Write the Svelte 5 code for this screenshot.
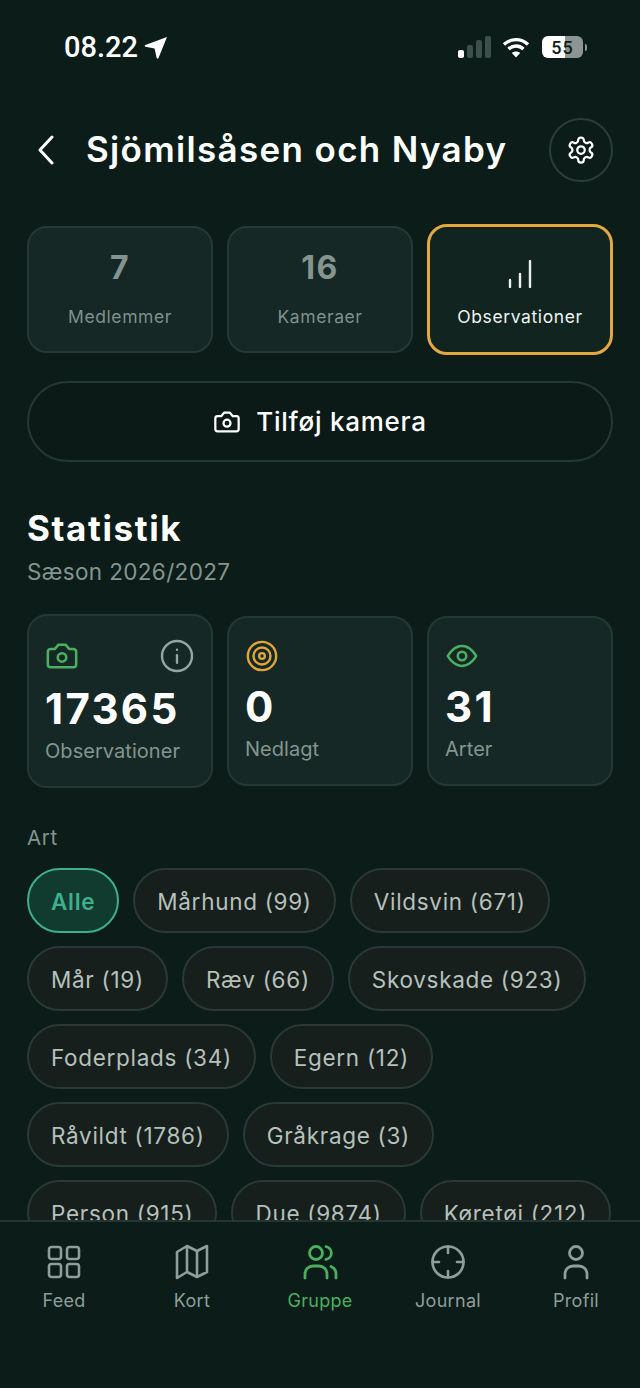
<script lang="ts">
	const chips = [
		'Mårhund (99)', 'Vildsvin (671)', 'Mår (19)', 'Ræv (66)', 'Skovskade (923)',
		'Foderplads (34)', 'Egern (12)', 'Råvildt (1786)', 'Gråkrage (3)',
		'Person (915)', 'Due (9874)', 'Køretøj (212)'
	]
</script>

<div class="screen">
	<main class="content">
		<div class="status">
			<div class="time">
				<span>08.22</span>
				<svg width="24" height="24" viewBox="0 0 24 24" aria-hidden="true"><path d="M23 2 L14.5 23 Q13.5 24.5 12.6 22.8 L10.6 13.6 L1.5 11.8 Q0 11 1.4 10 Z" fill="#fff"/></svg>
			</div>
			<div class="indicators">
				<div class="signal">
					<i class="on"></i><i style="height:13px"></i><i style="height:18px"></i><i style="height:22px"></i>
				</div>
				<svg width="28" height="21" viewBox="0 0 28 21" aria-hidden="true">
					<path d="M2 7.5 C9 1 19 1 26 7.5 M6.5 12 C11 8 17 8 21.5 12" fill="none" stroke="#fff" stroke-width="3.4"/>
					<path d="M14 20.5 L9.8 16 C12 14 16 14 18.2 16 Z" fill="#fff"/>
				</svg>
				<div class="battery"><span>55</span></div>
				<div class="nub"></div>
			</div>
		</div>

		<header class="top">
			<svg class="back" width="22" height="30" viewBox="0 0 22 30" aria-hidden="true"><path d="M16 2 L4 15 L16 28" fill="none" stroke="#fff" stroke-width="3" stroke-linecap="round" stroke-linejoin="round"/></svg>
			<h1>Sjömilsåsen och Nyaby</h1>
			<button class="gear" aria-label="Indstillinger">
				<svg width="30" height="30" viewBox="0 0 24 24" fill="none" stroke="#fff" stroke-width="1.8" stroke-linecap="round" stroke-linejoin="round"><path d="M12.22 2h-.44a2 2 0 0 0-2 2v.18a2 2 0 0 1-1 1.73l-.43.25a2 2 0 0 1-2 0l-.15-.08a2 2 0 0 0-2.73.73l-.22.38a2 2 0 0 0 .73 2.73l.15.1a2 2 0 0 1 1 1.72v.51a2 2 0 0 1-1 1.74l-.15.09a2 2 0 0 0-.73 2.73l.22.38a2 2 0 0 0 2.73.73l.15-.08a2 2 0 0 1 2 0l.43.25a2 2 0 0 1 1 1.73V20a2 2 0 0 0 2 2h.44a2 2 0 0 0 2-2v-.18a2 2 0 0 1 1-1.73l.43-.25a2 2 0 0 1 2 0l.15.08a2 2 0 0 0 2.73-.73l.22-.39a2 2 0 0 0-.73-2.73l-.15-.08a2 2 0 0 1-1-1.74v-.5a2 2 0 0 1 1-1.74l.15-.09a2 2 0 0 0 .73-2.73l-.22-.38a2 2 0 0 0-2.73-.73l-.15.08a2 2 0 0 1-2 0l-.43-.25a2 2 0 0 1-1-1.73V4a2 2 0 0 0-2-2z"/><circle cx="12" cy="12" r="3"/></svg>
			</button>
		</header>

		<section class="tabs">
			<div class="tab"><strong>7</strong><span>Medlemmer</span></div>
			<div class="tab"><strong>16</strong><span>Kameraer</span></div>
			<div class="tab active">
				<svg width="24" height="28" viewBox="0 0 24 28" fill="none" stroke="#e8efec" stroke-width="2.4" stroke-linecap="round" aria-hidden="true"><path d="M2 27v-7M12 27V14M22 27V1"/></svg>
				<span>Observationer</span>
			</div>
		</section>

		<button class="add">
			<svg width="28" height="28" viewBox="0 0 24 24" fill="none" stroke="#fff" stroke-width="1.9" stroke-linecap="round" stroke-linejoin="round"><path d="M14.5 4h-5L7 7H4a2 2 0 0 0-2 2v9a2 2 0 0 0 2 2h16a2 2 0 0 0 2-2V9a2 2 0 0 0-2-2h-3z"/><circle cx="12" cy="13" r="3"/></svg>
			Tilføj kamera
		</button>

		<h2>Statistik</h2>
		<p class="season">Sæson 2026/2027</p>

		<section class="stats">
			<div class="stat first">
				<div class="icons">
					<svg width="34" height="34" viewBox="0 0 24 24" fill="none" stroke="#4caf5f" stroke-width="1.8" stroke-linecap="round" stroke-linejoin="round"><path d="M14.5 4h-5L7 7H4a2 2 0 0 0-2 2v9a2 2 0 0 0 2 2h16a2 2 0 0 0 2-2V9a2 2 0 0 0-2-2h-3z"/><circle cx="12" cy="13" r="3"/></svg>
					<svg width="36" height="36" viewBox="0 0 24 24" fill="none" stroke="#96a5a1" stroke-width="1.6" stroke-linecap="round"><circle cx="12" cy="12" r="10"/><path d="M12 16.5v-5M12 7.8v.1"/></svg>
				</div>
				<strong>17365</strong>
				<span>Observationer</span>
			</div>
			<div class="stat">
				<div class="icons">
					<svg width="34" height="34" viewBox="0 0 24 24" fill="none" stroke="#e0a63c" stroke-width="1.7"><circle cx="12" cy="12" r="10"/><circle cx="12" cy="12" r="6"/><circle cx="12" cy="12" r="2"/></svg>
				</div>
				<strong>0</strong>
				<span>Nedlagt</span>
			</div>
			<div class="stat">
				<div class="icons">
					<svg width="34" height="34" viewBox="0 0 24 24" fill="none" stroke="#4caf5f" stroke-width="1.8" stroke-linecap="round" stroke-linejoin="round"><path d="M2 12s3.6-7 10-7 10 7 10 7-3.6 7-10 7-10-7-10-7z"/><circle cx="12" cy="12" r="3"/></svg>
				</div>
				<strong>31</strong>
				<span>Arter</span>
			</div>
		</section>

		<p class="label">Art</p>
		<div class="chips">
			<button class="chip selected">Alle</button>
			{#each chips as chip}
				<button class="chip">{chip}</button>
			{/each}
		</div>
	</main>

	<nav class="nav">
		<div class="item">
			<svg viewBox="0 0 36 36" fill="none" stroke="currentColor" stroke-width="2.6" stroke-linejoin="round"><rect x="3" y="3" width="12" height="12" rx="2.5"/><rect x="21" y="3" width="12" height="12" rx="2.5"/><rect x="3" y="20" width="12" height="13" rx="2.5"/><rect x="21" y="20" width="12" height="13" rx="2.5"/></svg>
			<span>Feed</span>
		</div>
		<div class="item">
			<svg viewBox="0 0 36 36" fill="none" stroke="currentColor" stroke-width="2.6" stroke-linejoin="round"><path d="M3 8 L13 2 L23 7 L33 2 V28 L23 33 L13 28 L3 34 Z"/><path d="M13 2V28M23 7V33"/></svg>
			<span>Kort</span>
		</div>
		<div class="item current">
			<svg viewBox="0 0 36 36" fill="none" stroke="currentColor" stroke-width="2.8" stroke-linecap="round"><circle cx="14" cy="9" r="6.5"/><path d="M3 34v-4a8 8 0 0 1 8-8h6a8 8 0 0 1 8 8v4"/><path d="M24 2.6a6.5 6.5 0 0 1 0 12.8M29 22.5a8 8 0 0 1 5 7.5v4"/></svg>
			<span>Gruppe</span>
		</div>
		<div class="item">
			<svg viewBox="0 0 36 36" fill="none" stroke="currentColor" stroke-width="2.6" stroke-linecap="round"><circle cx="18" cy="18" r="15.5"/><path d="M18 2.5V9M18 27v6.5M2.5 18H9M27 18h6.5"/></svg>
			<span>Journal</span>
		</div>
		<div class="item">
			<svg viewBox="0 0 36 36" fill="none" stroke="currentColor" stroke-width="2.8" stroke-linecap="round"><circle cx="18" cy="9" r="6.5"/><path d="M7 34v-4a8 8 0 0 1 8-8h6a8 8 0 0 1 8 8v4"/></svg>
			<span>Profil</span>
		</div>
	</nav>
</div>

<style>
	:global(body) {
		margin: 0;
		background: #0b1c19;
	}

	.screen {
		width: 640px;
		height: 1388px;
		display: flex;
		flex-direction: column;
		background: #0b1c19;
		color: #fff;
		font-family: Inter, "Noto Sans", sans-serif;
		overflow: hidden;
	}

	button {
		font: inherit;
		color: inherit;
		cursor: pointer;
	}

	.content {
		flex: 1;
		min-height: 0;
		overflow: hidden;
		padding: 0 27px;
	}

	.status {
		height: 118px;
		display: flex;
		justify-content: space-between;
		align-items: flex-start;
		padding: 30px 26px 0 37px;
		box-sizing: border-box;
	}

	.time {
		display: flex;
		align-items: center;
		gap: 6px;
		font-family: Roboto, Inter, sans-serif;
		font-size: 29px;
		font-weight: 500;
		line-height: 34px;
	}

	.indicators {
		display: flex;
		align-items: center;
		height: 34px;
	}

	.signal {
		display: flex;
		align-items: flex-end;
		gap: 3px;
		margin-right: 11px;
	}

	.signal i {
		display: block;
		width: 6px;
		height: 8px;
		border-radius: 2px;
		background: #3d4f4b;
	}

	.signal i.on {
		background: #fff;
	}

	.battery {
		margin-left: 12px;
		width: 41px;
		height: 22px;
		border-radius: 6px;
		background: linear-gradient(to right, #fff 0 55%, #8c9592 55% 100%);
		display: flex;
		align-items: center;
		justify-content: center;
	}

	.battery span {
		font-family: Roboto, sans-serif;
		font-size: 18px;
		font-weight: 500;
		letter-spacing: 1px;
		color: #10201d;
	}

	.nub {
		width: 2px;
		height: 7px;
		margin-left: 2px;
		border-radius: 0 2px 2px 0;
		background: #8c9592;
	}

	.top {
		height: 64px;
		display: flex;
		align-items: center;
	}

	.back {
		margin-left: 9px;
		flex: none;
	}

	h1 {
		margin: 0 0 2px 28px;
		font-size: 35px;
		font-weight: 600;
		letter-spacing: 1.33px;
		white-space: nowrap;
	}

	.gear {
		margin-left: auto;
		width: 64px;
		height: 64px;
		padding: 0;
		border: 2px solid #2a3d39;
		border-radius: 50%;
		background: none;
		display: flex;
		align-items: center;
		justify-content: center;
	}

	.tabs {
		margin-top: 44px;
		display: grid;
		grid-template-columns: repeat(3, 186px);
		gap: 14px;
	}

	.tab {
		height: 127px;
		box-sizing: border-box;
		border: 2px solid #253934;
		border-radius: 20px;
		background: #152825;
		display: flex;
		flex-direction: column;
		align-items: center;
		color: #7f918d;
		padding-top: 20px;
	}

	.tab strong {
		font-size: 32px;
		font-weight: 700;
		line-height: 40px;
		letter-spacing: 1.5px;
		color: #84958f;
	}

	.tab span {
		margin-top: 17px;
		font-size: 17.5px;
		line-height: 24px;
		letter-spacing: 0.6px;
	}

	.tab.active {
		height: 131px;
		margin: -2px 0;
		border: 3px solid #e3a940;
		background: #11241f;
		color: #eef3f1;
		padding-top: 33px;
	}

	.add {
		margin-top: 28px;
		width: 100%;
		height: 81px;
		border: 2px solid #253934;
		border-radius: 41px;
		background: #0b1a17;
		display: flex;
		align-items: center;
		justify-content: center;
		gap: 15px;
		font-size: 26px;
		font-weight: 500;
		letter-spacing: 0.75px;
	}

	h2 {
		margin: 44px 0 0;
		font-size: 35px;
		line-height: 44px;
		font-weight: 700;
		letter-spacing: 1.6px;
	}

	.season {
		margin: 8px 0 0;
		font-size: 22.5px;
		line-height: 28px;
		letter-spacing: 0.35px;
		color: #84958f;
	}

	.stats {
		margin-top: 28px;
		display: grid;
		grid-template-columns: repeat(3, 186px);
		gap: 14px;
		align-items: center;
	}

	.stat {
		height: 170px;
		box-sizing: border-box;
		border: 2px solid #253934;
		border-radius: 20px;
		background: #152825;
		padding: 20px 16px 0;
		display: flex;
		flex-direction: column;
	}

	.stat.first {
		height: 174px;
		padding-top: 22px;
	}

	.icons {
		height: 36px;
		display: flex;
		align-items: center;
		justify-content: space-between;
	}

	.stat strong {
		margin-top: 8px;
		font-size: 42px;
		line-height: 50px;
		font-weight: 700;
		letter-spacing: 2.3px;
	}

	.stat.first strong {
		margin-top: 10px;
	}

	.stat span {
		margin-top: 4px;
		font-size: 20px;
		line-height: 26px;
		letter-spacing: 0.05px;
		color: #84958f;
	}

	.label {
		margin: 37px 0 0;
		font-size: 20.5px;
		line-height: 26px;
		letter-spacing: 0.6px;
		color: #84958f;
	}

	.chips {
		margin-top: 17px;
		display: flex;
		flex-wrap: wrap;
		gap: 13px 14px;
	}

	.chip {
		height: 65px;
		padding: 2px 22px 0;
		border: 2px solid #2a3935;
		border-radius: 33px;
		background: #161f1b;
		color: #b6c0bc;
		font-size: 22.5px;
		letter-spacing: 0.7px;
		white-space: nowrap;
	}

	.chip.selected {
		background: #123b30;
		border-color: #3fae8b;
		color: #3fae8b;
		font-weight: 600;
	}

	.nav {
		flex: none;
		height: 168px;
		box-sizing: border-box;
		border-top: 2px solid #243632;
		background: #0b1c19;
		display: grid;
		grid-template-columns: repeat(5, 128px);
		padding-top: 22px;
	}

	.item {
		display: flex;
		flex-direction: column;
		align-items: center;
		color: #8e9e9a;
	}

	.item svg {
		width: 36px;
		height: 36px;
	}

	.item span {
		margin-top: 9px;
		font-size: 18px;
		line-height: 24px;
		letter-spacing: 0.3px;
	}

	.item.current {
		color: #4caf5f;
	}
</style>
